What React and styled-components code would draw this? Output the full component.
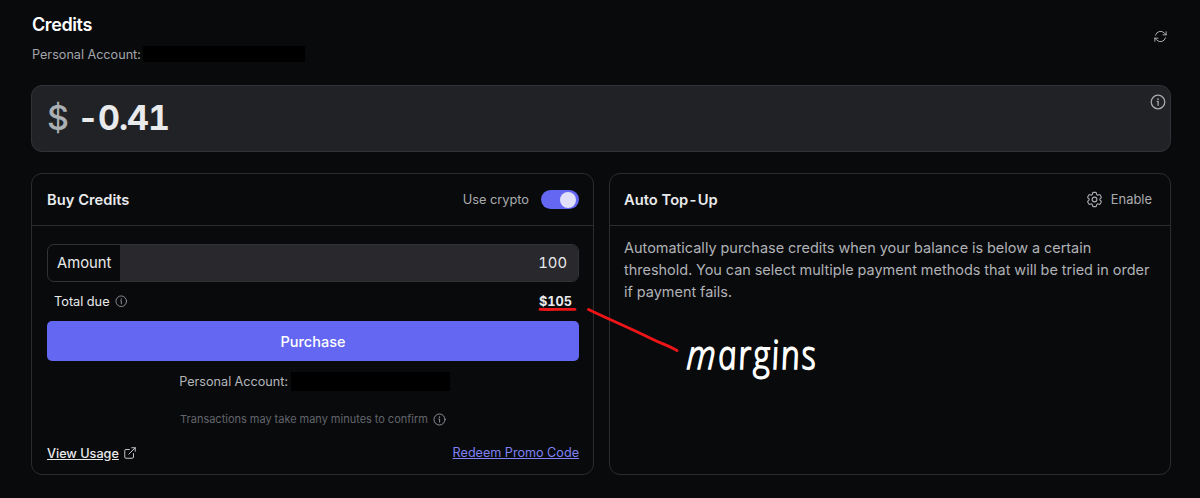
import React, { useState } from "react";
import styled, { createGlobalStyle } from "styled-components";
import { FiExternalLink } from "react-icons/fi";

const GlobalStyle = createGlobalStyle`
  * {
    box-sizing: border-box;
  }

  body {
    margin: 0;
    background-color: #090a0c;
    color: #e9eaec;
    font-family: Inter, sans-serif;
    overflow: hidden;
  }
`;

const InfoIcon = ({ size, color, thick }) => (
  <Icon width={size} height={size} viewBox="0 0 24 24" color={color}>
    <circle cx="12" cy="12" r="10.2" strokeWidth={thick || 1.8} />
    <path d="M10.8 11h1.4v6" strokeWidth={thick || 1.8} />
    <path d="M12 7.4v.3" strokeWidth="2.4" />
  </Icon>
);

const RefreshIcon = () => (
  <Icon width="15" height="15" viewBox="0 0 24 24" color="#a9abaf">
    <path
      strokeWidth="1.6"
      d="M16.023 9.348h4.992v-.001M2.985 19.644v-4.992m0 0h4.992m-4.993 0 3.181 3.183a8.25 8.25 0 0 0 13.803-3.7M4.031 9.865a8.25 8.25 0 0 1 13.803-3.7l3.181 3.182m0-4.991v4.99"
    />
  </Icon>
);

const GearIcon = () => (
  <Icon width="19" height="19" viewBox="0 0 24 24" color="#a9abaf">
    <path
      strokeWidth="1.4"
      d="M9.594 3.94c.09-.542.56-.94 1.11-.94h2.593c.55 0 1.02.398 1.11.94l.213 1.281c.063.374.313.686.645.87.074.04.147.083.22.127.325.196.72.257 1.075.124l1.217-.456a1.125 1.125 0 0 1 1.37.49l1.296 2.247a1.125 1.125 0 0 1-.26 1.431l-1.003.827c-.293.241-.438.613-.43.992a7.723 7.723 0 0 1 0 .255c-.008.378.137.75.43.991l1.004.827c.424.35.534.955.26 1.43l-1.298 2.247a1.125 1.125 0 0 1-1.369.491l-1.217-.456c-.355-.133-.75-.072-1.076.124a6.47 6.47 0 0 1-.22.128c-.331.183-.581.495-.644.869l-.213 1.281c-.09.543-.56.94-1.11.94h-2.594c-.55 0-1.019-.398-1.11-.94l-.213-1.281c-.062-.374-.312-.686-.644-.87a6.52 6.52 0 0 1-.22-.127c-.325-.196-.72-.257-1.076-.124l-1.217.456a1.125 1.125 0 0 1-1.369-.49l-1.297-2.247a1.125 1.125 0 0 1 .26-1.431l1.004-.827c.292-.24.437-.613.43-.991a6.932 6.932 0 0 1 0-.255c.007-.38-.138-.751-.43-.992l-1.004-.827a1.125 1.125 0 0 1-.26-1.43l1.297-2.247a1.125 1.125 0 0 1 1.37-.491l1.216.456c.356.133.751.072 1.076-.124.072-.044.146-.086.22-.128.332-.183.582-.495.644-.869l.214-1.28Z"
    />
    <circle cx="12" cy="12" r="3" strokeWidth="1.4" />
  </Icon>
);

const App = () => {
  const [crypto, setCrypto] = useState(true);

  return (
    <Page>
      <GlobalStyle />
      <Header>
        <div>
          <Title>Credits</Title>
          <Account>
            Personal Account:
            <Redacted $width="162px" $height="16px" />
          </Account>
        </div>
        <IconButton type="button">
          <RefreshIcon />
        </IconButton>
      </Header>

      <Balance>
        <Amount>
          <Currency>$</Currency>
          <span>-0.41</span>
        </Amount>
        <InfoIcon size={16} color="#a9abaf" thick={1.9} />
      </Balance>

      <Columns>
        <Card>
          <CardHeader>
            <CardTitle>Buy Credits</CardTitle>
            <SwitchRow>
              Use crypto
              <Switch
                type="button"
                $on={crypto}
                onClick={() => setCrypto(!crypto)}
              />
            </SwitchRow>
          </CardHeader>
          <BuyBody>
            <Field>
              <FieldLabel>Amount</FieldLabel>
              <FieldValue>100</FieldValue>
            </Field>
            <TotalRow>
              <TotalLabel>
                Total due
                <InfoIcon size={12.5} color="#909298" />
              </TotalLabel>
              <Total>$105</Total>
            </TotalRow>
            <Purchase type="button">Purchase</Purchase>
            <BuyAccount>
              Personal Account:
              <Redacted $width="159px" $height="19px" />
            </BuyAccount>
            <Note>
              Transactions may take many minutes to confirm
              <InfoIcon size={13} color="#909298" />
            </Note>
            <Links>
              <UsageLink>
                <u>View Usage</u>
                <FiExternalLink size={14} strokeWidth={1.7} />
              </UsageLink>
              <PromoLink>Redeem Promo Code</PromoLink>
            </Links>
          </BuyBody>
        </Card>

        <Card>
          <CardHeader>
            <CardTitle>Auto Top-Up</CardTitle>
            <Enable type="button">
              <GearIcon />
              Enable
            </Enable>
          </CardHeader>
          <Description>
            Automatically purchase credits when your balance is below a certain
            <br />
            threshold. You can select multiple payment methods that will be
            tried in order
            <br />
            if payment fails.
          </Description>
        </Card>
      </Columns>

      {/* pen marks over the cards */}
      <Ink viewBox="0 0 300 110">
        <path d="M10 19.400C22 19.600 34 19.200 45 19.400" />
        <path d="M58.500 19.500C78 29 98 37 121 48.500C131 53.500 138 55.500 147 60.500" />
      </Ink>
      <InkText>
        <Slanted>m</Slanted>argins
      </InkText>
    </Page>
  );
};

const Page = styled.main`
  position: relative;
  width: 1200px;
  height: 498px;
  padding: 14px 29px 0 31px;
  display: flex;
  flex-direction: column;
  font-variant-numeric: tabular-nums;
`;

const Icon = styled.svg`
  flex: none;
  fill: none;
  stroke: ${(props) => props.color};
  stroke-linecap: round;
  stroke-linejoin: round;
`;

const Header = styled.header`
  display: flex;
  justify-content: space-between;
  height: 71px;
  padding: 0 3px 0 1px;
`;

const Title = styled.h1`
  margin: 0;
  color: white;
  font-size: 18px;
  font-weight: 600;
  line-height: 22px;
  letter-spacing: -0.4px;
`;

const Account = styled.div`
  display: flex;
  align-items: center;
  gap: 2px;
  margin-top: 9px;
  height: 18px;
  color: #a3a5aa;
  font-size: 12.65px;
`;

const Redacted = styled.span`
  width: ${(props) => props.$width};
  height: ${(props) => props.$height};
  background-color: black;
`;

const IconButton = styled.button`
  display: flex;
  height: 15px;
  margin-top: 15px;
  padding: 0;
  border: none;
  background: none;
`;

const Balance = styled.section`
  display: flex;
  justify-content: space-between;
  height: 67px;
  padding: 8px 4px 0 15px;
  border: 1px solid #323338;
  border-radius: 11px;
  background-color: #212225;
`;

const Amount = styled.div`
  display: flex;
  gap: 9px;
  height: 48px;
  font-size: 34px;
  font-weight: 700;
  line-height: 48px;
  letter-spacing: -1px;
`;

const Currency = styled.span`
  color: #a9afb3;
  font-weight: 500;
`;

const Columns = styled.div`
  display: grid;
  grid-template-columns: 563px 1fr;
  gap: 15px;
  height: 302px;
  margin-top: 21px;
`;

const Card = styled.section`
  border: 1px solid #2b2c2f;
  border-radius: 11px;
`;

const CardHeader = styled.div`
  display: flex;
  align-items: center;
  justify-content: space-between;
  height: 52px;
  padding: 0 14px 0 15px;
  border-bottom: 1px solid #2b2c2f;

  ${Card} + ${Card} & {
    padding-left: 14px;
  }
`;

const CardTitle = styled.h2`
  margin: 0;
  font-size: 14.7px;
  font-weight: 600;
`;

const SwitchRow = styled.div`
  display: flex;
  align-items: center;
  gap: 12px;
  color: #a9abaf;
  font-size: 12.8px;
`;

const Switch = styled.button`
  display: flex;
  justify-content: ${(props) => (props.$on ? "flex-end" : "flex-start")};
  width: 38px;
  height: 19px;
  padding: 1.5px 3px;
  border: none;
  border-radius: 10px;
  background-color: ${(props) => (props.$on ? "#6467f2" : "#3a3b40")};

  &::after {
    content: "";
    width: 16px;
    height: 16px;
    border-radius: 50%;
    background-color: #e1e0fb;
  }
`;

const BuyBody = styled.div`
  padding: 18px 14px 0 15px;
`;

const Field = styled.div`
  display: flex;
  height: 38px;
  border: 1px solid #323337;
  border-radius: 7px;
  overflow: hidden;
  font-size: 14.8px;
  line-height: 36px;
`;

const FieldLabel = styled.span`
  width: 72px;
  padding-left: 9px;
`;

const FieldValue = styled.span`
  flex: 1;
  padding-right: 11px;
  background-color: #29282c;
  text-align: right;
`;

const TotalRow = styled.div`
  display: flex;
  align-items: center;
  justify-content: space-between;
  height: 39px;
  padding: 0 7px;
  font-size: 12.75px;
`;

const TotalLabel = styled.span`
  display: flex;
  align-items: center;
  gap: 5px;
`;

const Total = styled.span`
  font-weight: 700;
`;

const Purchase = styled.button`
  display: block;
  width: 100%;
  height: 40px;
  border: none;
  border-radius: 5px;
  background-color: #6467f2;
  color: white;
  font-family: inherit;
  font-size: 14.5px;
  font-weight: 500;
`;

const BuyAccount = styled.div`
  display: flex;
  align-items: center;
  justify-content: center;
  gap: 3px;
  height: 40px;
  padding-left: 3px;
  color: #b4b6ba;
  font-size: 12.65px;
`;

const Note = styled.div`
  display: flex;
  align-items: center;
  justify-content: center;
  gap: 5px;
  height: 36px;
  color: #62656b;
  font-size: 11px;
`;

const Links = styled.div`
  display: flex;
  align-items: center;
  justify-content: space-between;
  height: 32px;
  font-size: 12.65px;
`;

const UsageLink = styled.a`
  display: flex;
  align-items: center;
  gap: 4px;
  font-weight: 500;

  svg {
    color: #c4c6ca;
  }
`;

const PromoLink = styled.a`
  margin-top: -1px;
  color: #7f82f5;
  text-decoration: underline;
`;

const Enable = styled.button`
  display: flex;
  align-items: center;
  gap: 7px;
  padding: 0 4px;
  border: none;
  background: none;
  color: #a9abaf;
  font-family: inherit;
  font-size: 12.9px;
`;

const Description = styled.p`
  margin: 0;
  padding: 11px 14px;
  color: #b0b2b6;
  font-size: 14.48px;
  line-height: 22px;
  white-space: nowrap;
`;

const Ink = styled.svg`
  position: absolute;
  left: 530px;
  top: 290px;
  width: 300px;
  height: 110px;
  fill: none;
  stroke: #ee1519;
  stroke-width: 2.9;
  stroke-linecap: round;
`;

const InkText = styled.span`
  position: absolute;
  left: 687px;
  top: 325px;
  color: white;
  font-family: "Open Sans", sans-serif;
  font-size: 40px;
  font-style: italic;
  font-weight: 300;
  line-height: 58px;
  letter-spacing: 2px;
  -webkit-text-stroke: 1.6px white;
  transform: scaleX(0.84) skewX(9deg);
  transform-origin: left center;
`;

const Slanted = styled.span`
  display: inline-block;
  transform: skewX(-12deg);
`;

export default App;
